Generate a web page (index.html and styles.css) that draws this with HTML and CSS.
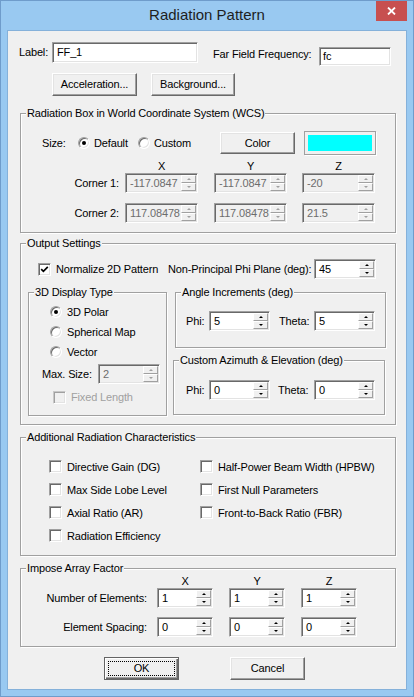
FILE: index.html
```html
<!DOCTYPE html>
<html>
<head>
<meta charset="utf-8">
<link rel="stylesheet" href="styles.css">
</head>
<body>
<div class="window">
  <div class="titlebar">
    <div class="tb-left"></div>
    <div class="title">Radiation Pattern</div>
    <div class="tb-right">
      <div class="close"><svg width="9" height="8" viewBox="0 0 9 8"><path d="M1 0.5 L8 7.5 M8 0.5 L1 7.5" stroke="#fff" stroke-width="1.8" fill="none"/></svg></div>
    </div>
  </div>
  <div class="client">
    <div class="row1">
      <span class="lbl lbl-label">Label:</span>
      <div class="field f-label"><span class="ftext">FF_1</span></div>
      <span class="lbl lbl-ff">Far Field Frequency:</span>
      <div class="field f-fc"><span class="ftext">fc</span></div>
    </div>
    <div class="row2">
      <div class="btn b-acc">Acceleration...</div>
      <div class="btn b-bg">Background...</div>
    </div>

    <div class="group g1">
      <div class="gtitle">Radiation Box in World Coordinate System (WCS)</div>
      <div class="size-row">
        <span class="size-lbl">Size:</span>
        <span class="ritem r-default"><span class="radio on"></span>Default</span>
        <span class="ritem r-custom"><span class="radio"></span>Custom</span>
        <div class="btn color-btn">Color</div>
        <div class="swatch"><div class="swatch-fill"></div></div>
      </div>
      <div class="hrow">
        <span class="hspacer"></span>
        <span class="colhead c1">X</span>
        <span class="colhead c2">Y</span>
        <span class="colhead c3">Z</span>
      </div>
      <div class="crow">
        <span class="rlabel">Corner 1:</span>
        <div class="field spin dis w73 c1"><span class="ftext">-117.0847</span><span class="spinbtns"><span class="sb up"></span><span class="sb dn"></span></span></div>
        <div class="field spin dis w73 c2"><span class="ftext">-117.0847</span><span class="spinbtns"><span class="sb up"></span><span class="sb dn"></span></span></div>
        <div class="field spin dis w73 c3"><span class="ftext">-20</span><span class="spinbtns"><span class="sb up"></span><span class="sb dn"></span></span></div>
      </div>
      <div class="crow crow2">
        <span class="rlabel">Corner 2:</span>
        <div class="field spin dis w73 c1"><span class="ftext">117.08478</span><span class="spinbtns"><span class="sb up"></span><span class="sb dn"></span></span></div>
        <div class="field spin dis w73 c2"><span class="ftext">117.08478</span><span class="spinbtns"><span class="sb up"></span><span class="sb dn"></span></span></div>
        <div class="field spin dis w73 c3"><span class="ftext">21.5</span><span class="spinbtns"><span class="sb up"></span><span class="sb dn"></span></span></div>
      </div>
    </div>

    <div class="group g2">
      <div class="gtitle">Output Settings</div>
      <div class="norm-row">
        <span class="citem norm"><span class="chk"><svg width="9" height="9" viewBox="0 0 9 9"><path d="M1.2 4.2 L3.4 6.4 L7.8 1.8" fill="none" stroke="#000" stroke-width="1.7"/></svg></span>Normalize 2D Pattern</span>
        <span class="npp">Non-Principal Phi Plane (deg):</span>
        <div class="field spin w62"><span class="ftext">45</span><span class="spinbtns"><span class="sb up"></span><span class="sb dn"></span></span></div>
      </div>
      <div class="lower">
        <div class="group g-disp">
          <div class="gtitle">3D Display Type</div>
          <div class="rrow first"><span class="radio on"></span>3D Polar</div>
          <div class="rrow"><span class="radio"></span>Spherical Map</div>
          <div class="rrow"><span class="radio"></span>Vector</div>
          <div class="max-row">
            <span class="max-lbl">Max. Size:</span>
            <div class="field spin dis w62"><span class="ftext">2</span><span class="spinbtns"><span class="sb up"></span><span class="sb dn"></span></span></div>
          </div>
          <div class="fixed-row"><span class="chk dis"></span><span class="distext">Fixed Length</span></div>
        </div>
        <div class="rcol">
          <div class="group g-angle">
            <div class="gtitle">Angle Increments (deg)</div>
            <div class="pt-row">
              <span class="phi-lbl">Phi:</span>
              <div class="field spin w61"><span class="ftext">5</span><span class="spinbtns"><span class="sb up"></span><span class="sb dn"></span></span></div>
              <span class="theta-lbl">Theta:</span>
              <div class="field spin w61"><span class="ftext">5</span><span class="spinbtns"><span class="sb up"></span><span class="sb dn"></span></span></div>
            </div>
          </div>
          <div class="group g-custom">
            <div class="gtitle">Custom Azimuth &amp; Elevation (deg)</div>
            <div class="pt-row">
              <span class="phi-lbl">Phi:</span>
              <div class="field spin w61"><span class="ftext">0</span><span class="spinbtns"><span class="sb up"></span><span class="sb dn"></span></span></div>
              <span class="theta-lbl">Theta:</span>
              <div class="field spin w61"><span class="ftext">0</span><span class="spinbtns"><span class="sb up"></span><span class="sb dn"></span></span></div>
            </div>
          </div>
        </div>
      </div>
    </div>

    <div class="group g3">
      <div class="gtitle">Additional Radiation Characteristics</div>
      <div class="chk-grid">
        <span class="citem"><span class="chk"></span>Directive Gain (DG)</span>
        <span class="citem"><span class="chk"></span>Half-Power Beam Width (HPBW)</span>
        <span class="citem"><span class="chk"></span>Max Side Lobe Level</span>
        <span class="citem"><span class="chk"></span>First Null Parameters</span>
        <span class="citem"><span class="chk"></span>Axial Ratio (AR)</span>
        <span class="citem"><span class="chk"></span>Front-to-Back Ratio (FBR)</span>
        <span class="citem"><span class="chk"></span>Radiation Efficiency</span>
      </div>
    </div>

    <div class="group g4">
      <div class="gtitle">Impose Array Factor</div>
      <div class="ahrow">
        <span class="aspacer"></span>
        <span class="acolhead">X</span>
        <span class="acolhead">Y</span>
        <span class="acolhead">Z</span>
      </div>
      <div class="arow">
        <span class="alabel">Number of Elements:</span>
        <div class="field spin w56"><span class="ftext">1</span><span class="spinbtns"><span class="sb up"></span><span class="sb dn"></span></span></div>
        <div class="field spin w56"><span class="ftext">1</span><span class="spinbtns"><span class="sb up"></span><span class="sb dn"></span></span></div>
        <div class="field spin w56"><span class="ftext">1</span><span class="spinbtns"><span class="sb up"></span><span class="sb dn"></span></span></div>
      </div>
      <div class="arow arow2">
        <span class="alabel">Element Spacing:</span>
        <div class="field spin w56"><span class="ftext">0</span><span class="spinbtns"><span class="sb up"></span><span class="sb dn"></span></span></div>
        <div class="field spin w56"><span class="ftext">0</span><span class="spinbtns"><span class="sb up"></span><span class="sb dn"></span></span></div>
        <div class="field spin w56"><span class="ftext">0</span><span class="spinbtns"><span class="sb up"></span><span class="sb dn"></span></span></div>
      </div>
    </div>

    <div class="btn-row">
      <div class="btn ok"><span class="focus">OK</span></div>
      <div class="btn cancel">Cancel</div>
    </div>
  </div>
</div>
</body>
</html>
```
FILE: styles.css
```css
html, body {
  margin: 0;
  padding: 0;
  background: #99c9f1;
}
body {
  font-family: "Liberation Sans", Arial, sans-serif;
  font-size: 11px;
  letter-spacing: -0.15px;
  color: #000;
}
.window {
  box-sizing: border-box;
  width: 414px;
  height: 697px;
  background: #99c9f1;
  border: 1px solid #6f9ccb;
}
.titlebar {
  height: 29px;
  display: grid;
  grid-template-columns: 1fr auto 1fr;
}
.title {
  font-size: 15px;
  line-height: 28px;
  letter-spacing: 0;
  color: #1e1e1e;
}
.tb-right {
  display: flex;
  justify-content: flex-end;
  align-items: flex-start;
}
.close {
  width: 31px;
  height: 20px;
  margin-right: 6px;
  background: #c75050;
  display: flex;
  align-items: center;
  justify-content: center;
}
.client {
  box-sizing: border-box;
  width: 400px;
  height: 660px;
  margin: 0 6px;
  border: 1px solid #85b1da;
  background: #f0f0f0;
  display: flex;
  flex-direction: column;
  align-items: flex-start;
}

/* generic controls */
.field {
  box-sizing: border-box;
  height: 20px;
  display: flex;
  padding: 1px;
  background: #fff;
  border: 1px solid;
  border-color: #a0a0a0 #fff #fff #a0a0a0;
  box-shadow: inset 1px 1px 0 #696969, inset -1px -1px 0 #e3e3e3;
  flex-shrink: 0;
}
.ftext {
  flex: 1;
  min-width: 0;
  overflow: hidden;
  white-space: nowrap;
  padding-left: 3px;
  line-height: 16px;
}
.dis {
  background: #f0f0f0;
}
.dis .ftext {
  color: #6d6d6d;
}
.spinbtns {
  width: 15px;
  display: flex;
  flex-direction: column;
  flex-shrink: 0;
}
.sb {
  flex: 1;
  box-sizing: border-box;
  background: #f0f0f0;
  border: 1px solid;
  border-color: #fff #a0a0a0 #a0a0a0 #fff;
  display: flex;
  align-items: center;
  justify-content: center;
}
.sb::before {
  content: "";
  width: 0;
  height: 0;
  border-left: 2px solid transparent;
  border-right: 2px solid transparent;
}
.sb.up::before {
  border-bottom: 2px solid #000;
}
.sb.dn::before {
  border-top: 2px solid #000;
}
.dis .sb.up::before {
  border-bottom-color: #a0a0a0;
}
.dis .sb.dn::before {
  border-top-color: #a0a0a0;
}
.btn {
  box-sizing: border-box;
  height: 23px;
  line-height: 21px;
  text-align: center;
  background: #f0f0f0;
  border: 1px solid;
  border-color: #fff #696969 #696969 #fff;
  box-shadow: inset -1px -1px 0 #a0a0a0, inset 1px 1px 0 #e3e3e3;
  flex-shrink: 0;
}
.radio {
  box-sizing: border-box;
  width: 12px;
  height: 12px;
  border-radius: 50%;
  border: 1px solid;
  border-color: #a0a0a0 #fff #fff #a0a0a0;
  box-shadow: inset 1px 1px 0 #696969, inset -1px -1px 0 #e3e3e3;
  background: #fff;
  display: flex;
  align-items: center;
  justify-content: center;
  flex-shrink: 0;
}
.radio.on::after {
  content: "";
  width: 4px;
  height: 4px;
  border-radius: 50%;
  background: #000;
}
.chk {
  box-sizing: border-box;
  width: 13px;
  height: 13px;
  border: 1px solid;
  border-color: #a0a0a0 #fff #fff #a0a0a0;
  box-shadow: inset 1px 1px 0 #696969, inset -1px -1px 0 #e3e3e3;
  background: #fff;
  display: flex;
  align-items: center;
  justify-content: center;
  flex-shrink: 0;
}
.chk.dis {
  background: #f0f0f0;
  border-color: #c8c8c8 #fff #fff #c8c8c8;
  box-shadow: inset 1px 1px 0 #a0a0a0, inset -1px -1px 0 #e3e3e3;
}
.citem {
  display: flex;
  align-items: center;
  gap: 5px;
}
.group {
  box-sizing: border-box;
  border: 1px solid #a0a0a0;
  box-shadow: inset 1px 1px 0 #fff, 1px 1px 0 #fff;
  flex-shrink: 0;
}
.gtitle {
  height: 14px;
  line-height: 14px;
  margin-top: -8px;
  margin-left: 5px;
  padding: 0 1px;
  width: max-content;
  background: #f0f0f0;
}

/* top rows */
.row1 {
  margin-top: 11px;
  padding-left: 11px;
  height: 24px;
  display: flex;
  align-items: flex-start;
}
.lbl-label {
  width: 33px;
  line-height: 21px;
}
.f-label {
  width: 146px;
  height: 21px;
}
.f-label .ftext {
  line-height: 17px;
}
.lbl-ff {
  margin-left: 15px;
  margin-top: 2px;
  width: 106px;
  line-height: 20px;
}
.f-fc {
  margin-top: 5px;
  width: 72px;
  height: 19px;
}
.f-fc .ftext {
  line-height: 15px;
  padding-left: 2px;
}
.row2 {
  margin-top: 7px;
  display: flex;
}
.b-acc {
  margin-left: 44px;
  width: 85px;
}
.b-bg {
  margin-left: 14px;
  width: 84px;
}

/* group 1 */
.g1 {
  margin-top: 17px;
  margin-left: 12px;
  width: 376px;
  height: 120px;
}
.size-row {
  margin-top: 11px;
  height: 24px;
  padding-left: 21px;
  display: flex;
  align-items: center;
}
.size-lbl {
  width: 36px;
}
.ritem {
  display: flex;
  align-items: center;
  gap: 4px;
}
.r-default {
  width: 60px;
}
.r-custom {
  width: 82px;
}
.color-btn {
  width: 75px;
  height: 22px;
  line-height: 20px;
}
.swatch {
  box-sizing: border-box;
  margin-left: 9px;
  width: 72px;
  height: 24px;
  padding: 3px;
  border: 1px solid #a0a0a0;
  box-shadow: 1px 1px 0 #fff;
}
.swatch-fill {
  width: 100%;
  height: 100%;
  background: #00ffff;
}
.hrow {
  margin-top: 5px;
  height: 13px;
  line-height: 13px;
  display: flex;
}
.hspacer {
  width: 104px;
}
.colhead {
  width: 73px;
  text-align: center;
}
.hrow .c2, .crow .c2 {
  margin-left: 16px;
}
.hrow .c3, .crow .c3 {
  margin-left: 15px;
}
.crow {
  height: 20px;
  display: flex;
  align-items: center;
}
.crow2 {
  margin-top: 10px;
}
.rlabel {
  box-sizing: border-box;
  width: 104px;
  padding-right: 6px;
  text-align: right;
}
.w73 { width: 73px; }
.w62 { width: 62px; }
.w61 { width: 61px; }
.w56 { width: 56px; }

/* group 2 */
.g2 {
  margin-top: 10px;
  margin-left: 12px;
  width: 376px;
  height: 182px;
}
.norm-row {
  margin-top: 9px;
  height: 20px;
  padding-left: 17px;
  display: flex;
  align-items: center;
}
.norm {
  width: 130px;
}
.npp {
  width: 146px;
}
.lower {
  margin-top: 13px;
  display: flex;
  align-items: flex-start;
}
.g-disp {
  margin-left: 7px;
  width: 139px;
  height: 124px;
}
.rrow {
  height: 20px;
  padding-left: 21px;
  display: flex;
  align-items: center;
  gap: 5px;
}
.rrow.first {
  margin-top: 3px;
}
.max-row {
  margin-top: 2px;
  height: 20px;
  padding-left: 13px;
  display: flex;
  align-items: center;
}
.max-lbl {
  width: 56px;
}
.fixed-row {
  margin-top: 3px;
  height: 20px;
  padding-left: 24px;
  display: flex;
  align-items: center;
  gap: 5px;
}
.distext {
  color: #a0a0a0;
}
.rcol {
  margin-left: 8px;
  display: flex;
  flex-direction: column;
}
.g-angle {
  width: 211px;
  height: 56px;
}
.g-custom {
  margin-top: 12px;
  margin-left: -2px;
  width: 212px;
  height: 55px;
}
.pt-row {
  height: 20px;
  display: flex;
  align-items: center;
}
.g-angle .pt-row {
  margin-top: 12px;
  padding-left: 10px;
}
.g-custom .pt-row {
  margin-top: 13px;
  padding-left: 12px;
}
.phi-lbl {
  width: 23px;
}
.theta-lbl {
  width: 35px;
  margin-left: 9px;
}
.g-custom .theta-lbl {
  width: 36px;
  margin-left: 8px;
}

/* group 3 */
.g3 {
  margin-top: 12px;
  margin-left: 12px;
  width: 376px;
  height: 119px;
}
.chk-grid {
  margin-top: 11px;
  padding-left: 28px;
  display: grid;
  grid-template-columns: 151px auto;
  grid-auto-rows: 23px;
}

/* group 4 */
.g4 {
  margin-top: 12px;
  margin-left: 12px;
  width: 376px;
  height: 79px;
}
.ahrow {
  height: 12px;
  line-height: 12px;
  display: flex;
}
.aspacer {
  width: 136px;
}
.acolhead {
  width: 56px;
  text-align: center;
  margin-right: 16px;
}
.arow {
  margin-top: 1px;
  height: 20px;
  display: flex;
  align-items: center;
  gap: 16px;
}
.arow2 {
  margin-top: 9px;
}
.alabel {
  box-sizing: border-box;
  width: 136px;
  padding-right: 10px;
  text-align: right;
  margin-right: -16px;
}

/* bottom buttons */
.btn-row {
  margin-top: 10px;
  display: flex;
}
.btn.ok {
  margin-left: 96px;
  width: 75px;
  border: 1px solid #646464;
  box-shadow: inset 1px 1px 0 #fff, inset -1px -1px 0 #696969, inset -2px -2px 0 #a0a0a0;
  padding: 3px;
  line-height: 15px;
}
.focus {
  display: block;
  box-sizing: border-box;
  height: 15px;
  outline: 1px dotted #000;
  outline-offset: -1px;
  line-height: 15px;
}
.btn.cancel {
  margin-left: 51px;
  width: 75px;
}
```
